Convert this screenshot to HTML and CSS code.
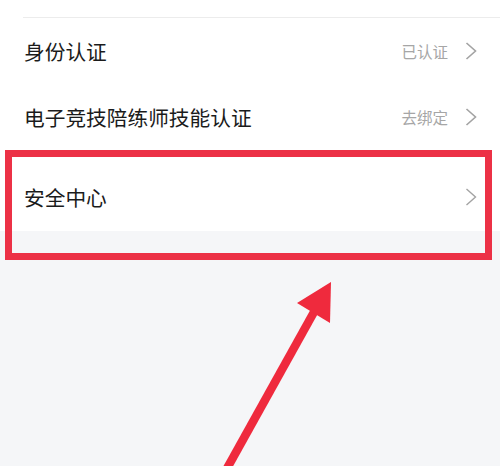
FILE: index.html
```html
<!DOCTYPE html>
<html lang="zh-CN">
<head>
<meta charset="utf-8">
<title>设置</title>
<link rel="stylesheet" href="styles.css">
</head>
<body>
<div class="page">
  <div class="list">
    <div class="head"></div>
    <div class="row first">
      <span class="label">身份认证</span>
      <span class="extra"><span class="value">已认证</span><svg class="chev" width="12" height="18" viewBox="0 0 12 18"><polyline points="1.5,1 10.5,9 1.5,17" fill="none" stroke="#a3a3a3" stroke-width="1.6"/></svg></span>
    </div>
    <div class="row">
      <span class="label">电子竞技陪练师技能认证</span>
      <span class="extra"><span class="value">去绑定</span><svg class="chev" width="12" height="18" viewBox="0 0 12 18"><polyline points="1.5,1 10.5,9 1.5,17" fill="none" stroke="#a3a3a3" stroke-width="1.6"/></svg></span>
    </div>
    <div class="row tall">
      <span class="label">安全中心</span>
      <span class="extra"><svg class="chev" width="12" height="18" viewBox="0 0 12 18"><polyline points="1.5,1 10.5,9 1.5,17" fill="none" stroke="#a3a3a3" stroke-width="1.4"/></svg></span>
    </div>
  </div>
  <div class="highlight"></div>
  <svg class="arrow" width="500" height="466" viewBox="0 0 500 466">
    <line x1="225" y1="472" x2="314" y2="312" stroke="#ef2a3d" stroke-width="8.5"/>
    <polygon points="331,282 297,303 330,323" fill="#ef2a3d"/>
  </svg>
</div>
</body>
</html>
```
FILE: styles.css
```css
html, body {
  margin: 0;
  padding: 0;
}
body {
  background: #f5f6f8;
  font-family: "Noto Sans CJK SC", "Noto Sans", sans-serif;
  width: 500px;
  height: 466px;
  overflow: hidden;
}
.page {
  position: relative;
  width: 500px;
  height: 466px;
}
.list {
  background: #ffffff;
}
.head {
  height: 17px;
  margin-left: 23px;
  border-bottom: 1px solid #ececec;
}
.row {
  display: flex;
  align-items: center;
  justify-content: space-between;
  height: 66px;
  padding: 0 23px 0 24px;
}
.row.tall {
  height: auto;
  padding-top: 34px;
  padding-bottom: 21px;
}
.label {
  font-size: 20.7px;
  line-height: 26px;
  color: #1b1b1b;
}
.extra {
  display: flex;
  align-items: center;
  gap: 17px;
}
.value {
  font-size: 15.5px;
  color: #a6a6a6;
  line-height: 22px;
}
.chev {
  display: block;
}
.highlight {
  position: absolute;
  left: 5px;
  top: 150px;
  width: 473px;
  height: 96px;
  border: 7px solid #ec3146;
}
.arrow {
  position: absolute;
  left: 0;
  top: 0;
}
```
